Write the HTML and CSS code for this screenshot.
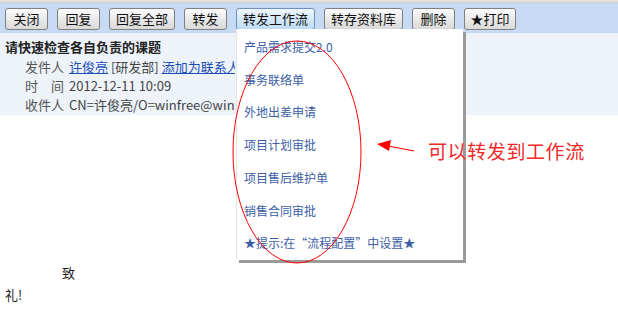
FILE: index.html
```html
<!DOCTYPE html>
<html>
  <head>
    <title>邮件</title>
    <link rel="stylesheet" href="styles.css">
  </head>
  <body>
    <div class="topline"></div>
    <div class="toolbar">
      <button class="btn w2">关闭</button>
      <button class="btn w2">回复</button>
      <button class="btn w4">回复全部</button>
      <button class="btn w2">转发</button>
      <button class="btn w5 active">转发工作流</button>
      <button class="btn w5">转存资料库</button>
      <button class="btn w2">删除</button>
      <button class="btn w3">★打印</button>
    </div>
    <div class="header">
      <div class="subject">请快速检查各自负责的课题</div>
      <div class="row"><span class="label">发件人</span><a href="#">许俊亮</a> [研发部] <a href="#">添加为联系人</a></div>
      <div class="row"><span class="label">时　间</span>2012-12-11 10:09</div>
      <div class="row"><span class="label">收件人</span>CN=许俊亮/O=winfree@winfree</div>
    </div>
    <div class="content">
      <p class="greet">致</p>
      <p class="end">礼!</p>
    </div>

    <!-- dropdown of 转发工作流 -->
    <ul class="menu">
      <li>产品需求提交2.0</li>
      <li>事务联络单</li>
      <li>外地出差申请</li>
      <li>项目计划审批</li>
      <li>项目售后维护单</li>
      <li>销售合同审批</li>
      <li>★提示:在“流程配置”中设置★</li>
    </ul>

    <!-- hand drawn note -->
    <svg class="note" width="618" height="309" viewBox="0 0 618 309">
      <ellipse cx="297" cy="152" rx="64" ry="111" fill="none" stroke="#f00" stroke-width="1"/>
      <line x1="414" y1="151" x2="388" y2="146" stroke="#f00" stroke-width="1.2"/>
      <polygon points="377,144 391,140 389,151" fill="#f00"/>
    </svg>
    <div class="tip">可以转发到工作流</div>
  </body>
</html>
```

FILE: styles.css
```css
body {
  margin: 0;
  font-family: "Noto Sans CJK SC", "DejaVu Sans", sans-serif;
  font-size: 12px;
  color: #333;
  background: #fff;
  position: relative;
  width: 618px;
  height: 309px;
  overflow: hidden;
}
.topline {
  height: 2px;
  background: #e2e2e2;
  border-bottom: 1px solid #d0d0d0;
}
.toolbar {
  display: flex;
  gap: 9px;
  background: #c6dbf3;
  padding: 5px 5px 3px;
  height: 22px;
}
.btn {
  font-family: "Noto Sans CJK SC", sans-serif;
  font-size: 13px;
  color: #111;
  height: 22px;
  line-height: 18px;
  padding: 0;
  border: 1px solid #808080;
  border-radius: 3px;
  background: linear-gradient(#fbfbfb, #d9d9d9);
}
.w2 { width: 43px; }
.w3 { width: 52px; }
.w4 { width: 66px; }
.w5 { width: 79px; }
.btn.active {
  background: linear-gradient(#eef6fd, #bcdcf5);
  border-color: #6f90b8;
}
.header {
  background: #eef3fa;
  padding: 6px 5px 3px;
  height: 73px;
}
.subject {
  font-weight: bold;
  font-size: 13px;
  color: #222;
  line-height: 16px;
  margin-bottom: 2px;
}
.row {
  font-size: 13px;
  line-height: 19px;
  color: #444;
  margin-left: 20px;
  width: 210px;
  overflow: hidden;
  white-space: nowrap;
}
.label {
  display: inline-block;
  width: 44px;
  color: #555;
}
.row a {
  color: #1a4fb8;
}
.content {
  padding: 148px 5px 0;
  font-size: 13px;
  color: #222;
  position: absolute;
  top: 0;
  left: 0;
}
.content p {
  margin: 0;
  line-height: 22px;
}
.greet {
  padding-left: 57px;
  padding-top: 114px;
}
.menu {
  position: absolute;
  left: 236px;
  top: 29px;
  width: 227px;
  height: 231px;
  margin: 0;
  padding: 2px 0 0 7px;
  list-style: none;
  background: #fff;
  border-left: 1px solid #e4e4e4;
  box-shadow: 3px 3px 0 #9a9a9a;
  box-sizing: border-box;
}
.menu li {
  color: #3c5ea6;
  font-size: 12px;
  line-height: 32.7px;
  white-space: nowrap;
}
.note {
  position: absolute;
  left: 0;
  top: 0;
  pointer-events: none;
}
.tip {
  position: absolute;
  left: 428px;
  top: 137px;
  color: #f02828;
  font-size: 19px;
  letter-spacing: 0.6px;
}
```
